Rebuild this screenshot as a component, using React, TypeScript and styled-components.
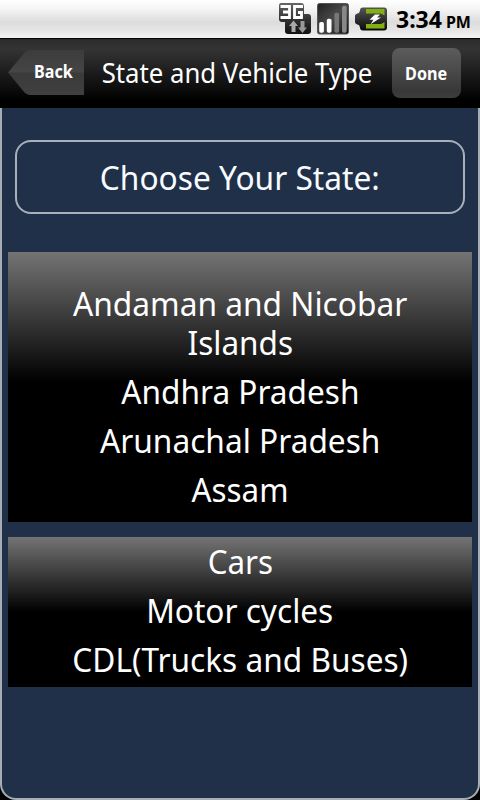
import React from "react";
import styled, { createGlobalStyle } from "styled-components";

const GlobalStyle = createGlobalStyle`
  * { box-sizing: border-box; }
  body { margin: 0; background: #000; font-family: "Noto Sans", "Open Sans", sans-serif; }
`;

const Screen = styled.div`
  width: 480px;
  height: 800px;
  display: flex;
  flex-direction: column;
  overflow: hidden;
  background: #000;
`;

const StatusBar = styled.div`
  height: 38px;
  flex: none;
  display: flex;
  align-items: center;
  gap: 4px;
  padding-left: 278px;
  background: linear-gradient(#ffffff 0%, #f4f4f4 25%, #dcdcdc 58%, #e6e6e6 80%, #f4f4f4 100%);
`;

const Clock = styled.div`
  display: flex;
  align-items: baseline;
  gap: 4px;
  margin-left: 5px;
  padding-top: 3px;
  color: #000;
  font-weight: 700;
  line-height: 38px;
`;

/* Condensed text run: $w is the set width in relation to the font's own. */
const Run = styled.span<{ $size: number; $w?: number }>`
  display: inline-block;
  white-space: nowrap;
  font-size: ${(p) => p.$size}px;
  transform: scaleX(${(p) => p.$w ?? 1});
`;

const Header = styled.header`
  height: 70px;
  flex: none;
  display: flex;
  border-top: 1px solid #050505;
  background: linear-gradient(#2b2b2b 0%, #343434 14%, #2c2c2c 26%, #1b1b1b 50%, #0a0a0a 76%, #000 88%);
  color: #fff;
`;

const BackButton = styled.button`
  width: 76px;
  height: 45px;
  margin: 11px 0 0 8px;
  padding: 0 0 2px 15px;
  border: 0;
  clip-path: polygon(0 50%, 17px 2px, 21px 0, 76px 0, 76px 45px, 21px 45px, 17px 43px);
  background: linear-gradient(#3c3c3c, #454545 48%, #3a3a3a 52%, #404040);
  color: #fff;
  font: 700 17px "Noto Sans", sans-serif;
`;

const Title = styled.h1`
  width: 308px;
  margin: 0;
  display: flex;
  justify-content: center;
  padding-right: 2px;
  font-weight: 400;
  line-height: 68px;
`;

const DoneButton = styled.button`
  width: 69px;
  height: 50px;
  margin-top: 9px;
  padding: 0;
  border: 0;
  border-radius: 8px;
  background: linear-gradient(#5c5c5c, #4a4a4a 45%, #383838 85%, #3d3d3d);
  color: #fff;
  font: 700 17px "Noto Sans", sans-serif;
`;

const Panel = styled.main`
  flex: 1;
  padding: 32px 6px 0;
  border: 2px solid #a7adb3;
  border-top: 0;
  border-radius: 0 0 16px 16px;
  background: #203048;
  color: #fff;
`;

const Prompt = styled.div`
  height: 74px;
  margin: 0 7px 38px;
  display: flex;
  justify-content: center;
  border: 2px solid #a9afbb;
  border-radius: 16px;
  line-height: 71px;
  color: #f7fbff;
`;

const Picker = styled.ul<{ $height: number; $top: number; $fade: number }>`
  height: ${(p) => p.$height}px;
  margin: 0 0 15px;
  padding: ${(p) => p.$top}px 0 0;
  list-style: none;
  background: linear-gradient(#747474, #000 ${(p) => p.$fade}px);
`;

const Option = styled.li`
  display: flex;
  flex-direction: column;
  align-items: center;
  padding: 5px 0;
  line-height: 39px;
`;

const NetworkIcon = () => (
  <svg width="34" height="34" viewBox="0 0 34 34">
    <defs>
      <linearGradient id="tile" x2="0" y2="1">
        <stop stopColor="#666" />
        <stop offset=".5" stopColor="#333" />
        <stop offset="1" stopColor="#111" />
      </linearGradient>
    </defs>
    <path d="M3 1H23Q26 1 26 4V12H30Q33 12 33 15V29Q33 32 30 32H10Q7 32 7 29V20H4Q1 20 1 17V4Q1 1 3 1Z" fill="url(#tile)" />
    <path d="M2.500 4.500H11.500V15.500H2.500M5 10H11.500M25 4.500H16.500V15.500H23.500V10.500H20" fill="none" stroke="#fff" strokeWidth="2.800" />
    <path d="M15.500 18.500L20 24H17.500V30H13.500V24H11Z" fill="#aaa" />
    <path d="M22.500 19H26.500V25.500H29L24.500 31L20 25.500H22.500Z" fill="#999" />
  </svg>
);

const SignalIcon = () => (
  <svg width="33" height="34" viewBox="0 0 33 34">
    <defs>
      <linearGradient id="signal" x2="1" y2="1">
        <stop stopColor="#222" />
        <stop offset=".5" stopColor="#4a4a4a" />
        <stop offset="1" stopColor="#111" />
      </linearGradient>
    </defs>
    <rect x="1.500" y="1.500" width="31" height="30.500" rx="2" fill="url(#signal)" stroke="#555" />
    <rect x="3.200" y="20" width="4.700" height="10.700" rx="1.800" fill="#fff" />
    <rect x="10.800" y="16.700" width="4.700" height="14" rx="1.800" fill="#fff" />
    <rect x="18.400" y="10.700" width="4.700" height="20" rx="1.800" fill="#777" />
    <rect x="26" y="3.700" width="4.700" height="27" rx="1.800" fill="#888" />
  </svg>
);

const BatteryIcon = () => (
  <svg width="34" height="26" viewBox="0 0 34 26">
    <defs>
      <linearGradient id="cell" x2="0" y2="1">
        <stop stopColor="#555" />
        <stop offset=".45" stopColor="#333" />
        <stop offset="1" stopColor="#080808" />
      </linearGradient>
    </defs>
    <path d="M10 1.500H31Q34 1.500 34 4.500V21.500Q34 24.500 31 24.500H10Q7 24.500 7 21.500L6 19Q2 18 2 16V10Q2 8 6 7L7 4.500Q7 1.500 10 1.500Z" fill="url(#cell)" />
    <path d="M13 3H31.500V9.500L28 7.500H13Z" fill="#82b010" />
    <path d="M13 18H28L31.500 16V22.500H13Z" fill="#82b010" />
    <path d="M22 8.500L16.500 13.800H20.500L17.500 18.300L28 11.600H24L27 8.500Z" fill="#fff" />
  </svg>
);

type Line = { text: string; w: number };

const states: Line[][] = [
  [{ text: "Andaman and Nicobar", w: 0.96 }, { text: "Islands", w: 0.955 }],
  [{ text: "Andhra Pradesh", w: 0.957 }],
  [{ text: "Arunachal Pradesh", w: 0.959 }],
  [{ text: "Assam", w: 0.95 }],
];

const vehicles: Line[][] = [
  [{ text: "Cars", w: 0.95 }],
  [{ text: "Motor cycles", w: 0.957 }],
  [{ text: "CDL(Trucks and Buses)", w: 0.958 }],
];

const Options = ({ items }: { items: Line[][] }) => (
  <>
    {items.map((lines) => (
      <Option key={lines[0].text}>
        {lines.map((l) => (
          <Run key={l.text} $size={33} $w={l.w}>{l.text}</Run>
        ))}
      </Option>
    ))}
  </>
);

export default function App() {
  return (
    <Screen>
      <GlobalStyle />
      <StatusBar>
        <NetworkIcon />
        <SignalIcon />
        <BatteryIcon />
        <Clock>
          <Run $size={23}>3:34</Run>
          <Run $size={16}>PM</Run>
        </Clock>
      </StatusBar>
      <Header>
        <BackButton><Run $size={17} $w={0.95}>Back</Run></BackButton>
        <Title><Run $size={27} $w={0.953}>State and Vehicle Type</Run></Title>
        <DoneButton><Run $size={17} $w={0.95}>Done</Run></DoneButton>
      </Header>
      <Panel>
        <Prompt><Run $size={33} $w={0.96}>Choose Your State:</Run></Prompt>
        <Picker $height={270} $top={27} $fade={130}><Options items={states} /></Picker>
        <Picker $height={150} $top={0} $fade={75}><Options items={vehicles} /></Picker>
      </Panel>
    </Screen>
  );
}
